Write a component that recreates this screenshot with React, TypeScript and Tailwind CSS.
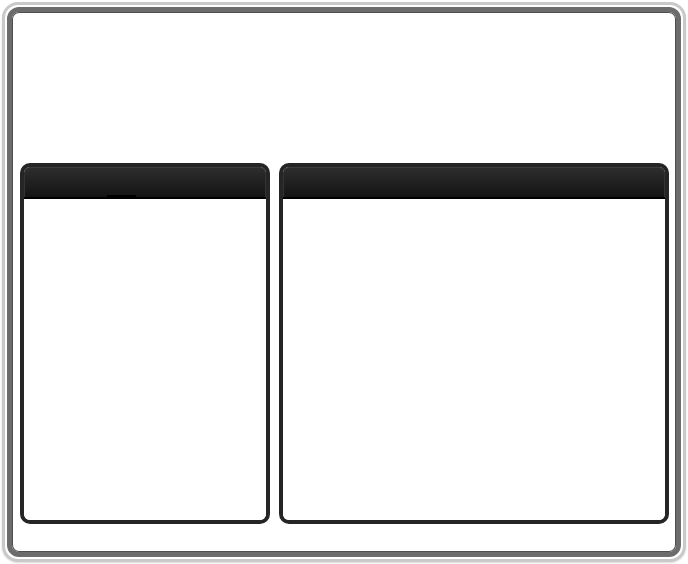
export default function App() {
  return (
    <div className="h-[564px] w-[688px] bg-white p-[2px]">
      <div className="h-full w-full rounded-[16px] border-[3px] border-[#c9c9c9] bg-white p-[2px] shadow-[0_1px_2px_rgba(0,0,0,0.15)]">
        <div className="flex h-full w-full gap-[9px] rounded-[12px] border-[5px] border-[#6c6c6c] bg-white pb-[28px] pl-[8px] pr-[7px] pt-[151px] shadow-[inset_0_0_0_1px_#4e4e4e]">
          <Panel className="w-[250px]" tab />
          <Panel className="flex-1" />
        </div>
      </div>
    </div>
  );
}

function Panel({ className, tab }: { className: string; tab?: boolean }) {
  return (
    <div className={`flex flex-col overflow-hidden rounded-[10px] border-[4px] border-[#252525] bg-white ${className}`}>
      <div className="relative h-[32px] shrink-0 rounded-t-[6px] border-b-[2px] border-black bg-gradient-to-b from-[#2e2e2e] to-[#141414] shadow-[inset_0_1px_0_#3c3c3c,inset_1px_0_0_#333,inset_-1px_0_0_#333]">
        {tab && <div className="absolute bottom-0 left-[83px] h-[2px] w-[29px] bg-black" />}
      </div>
      <div className="flex-1 bg-white" />
    </div>
  );
}
